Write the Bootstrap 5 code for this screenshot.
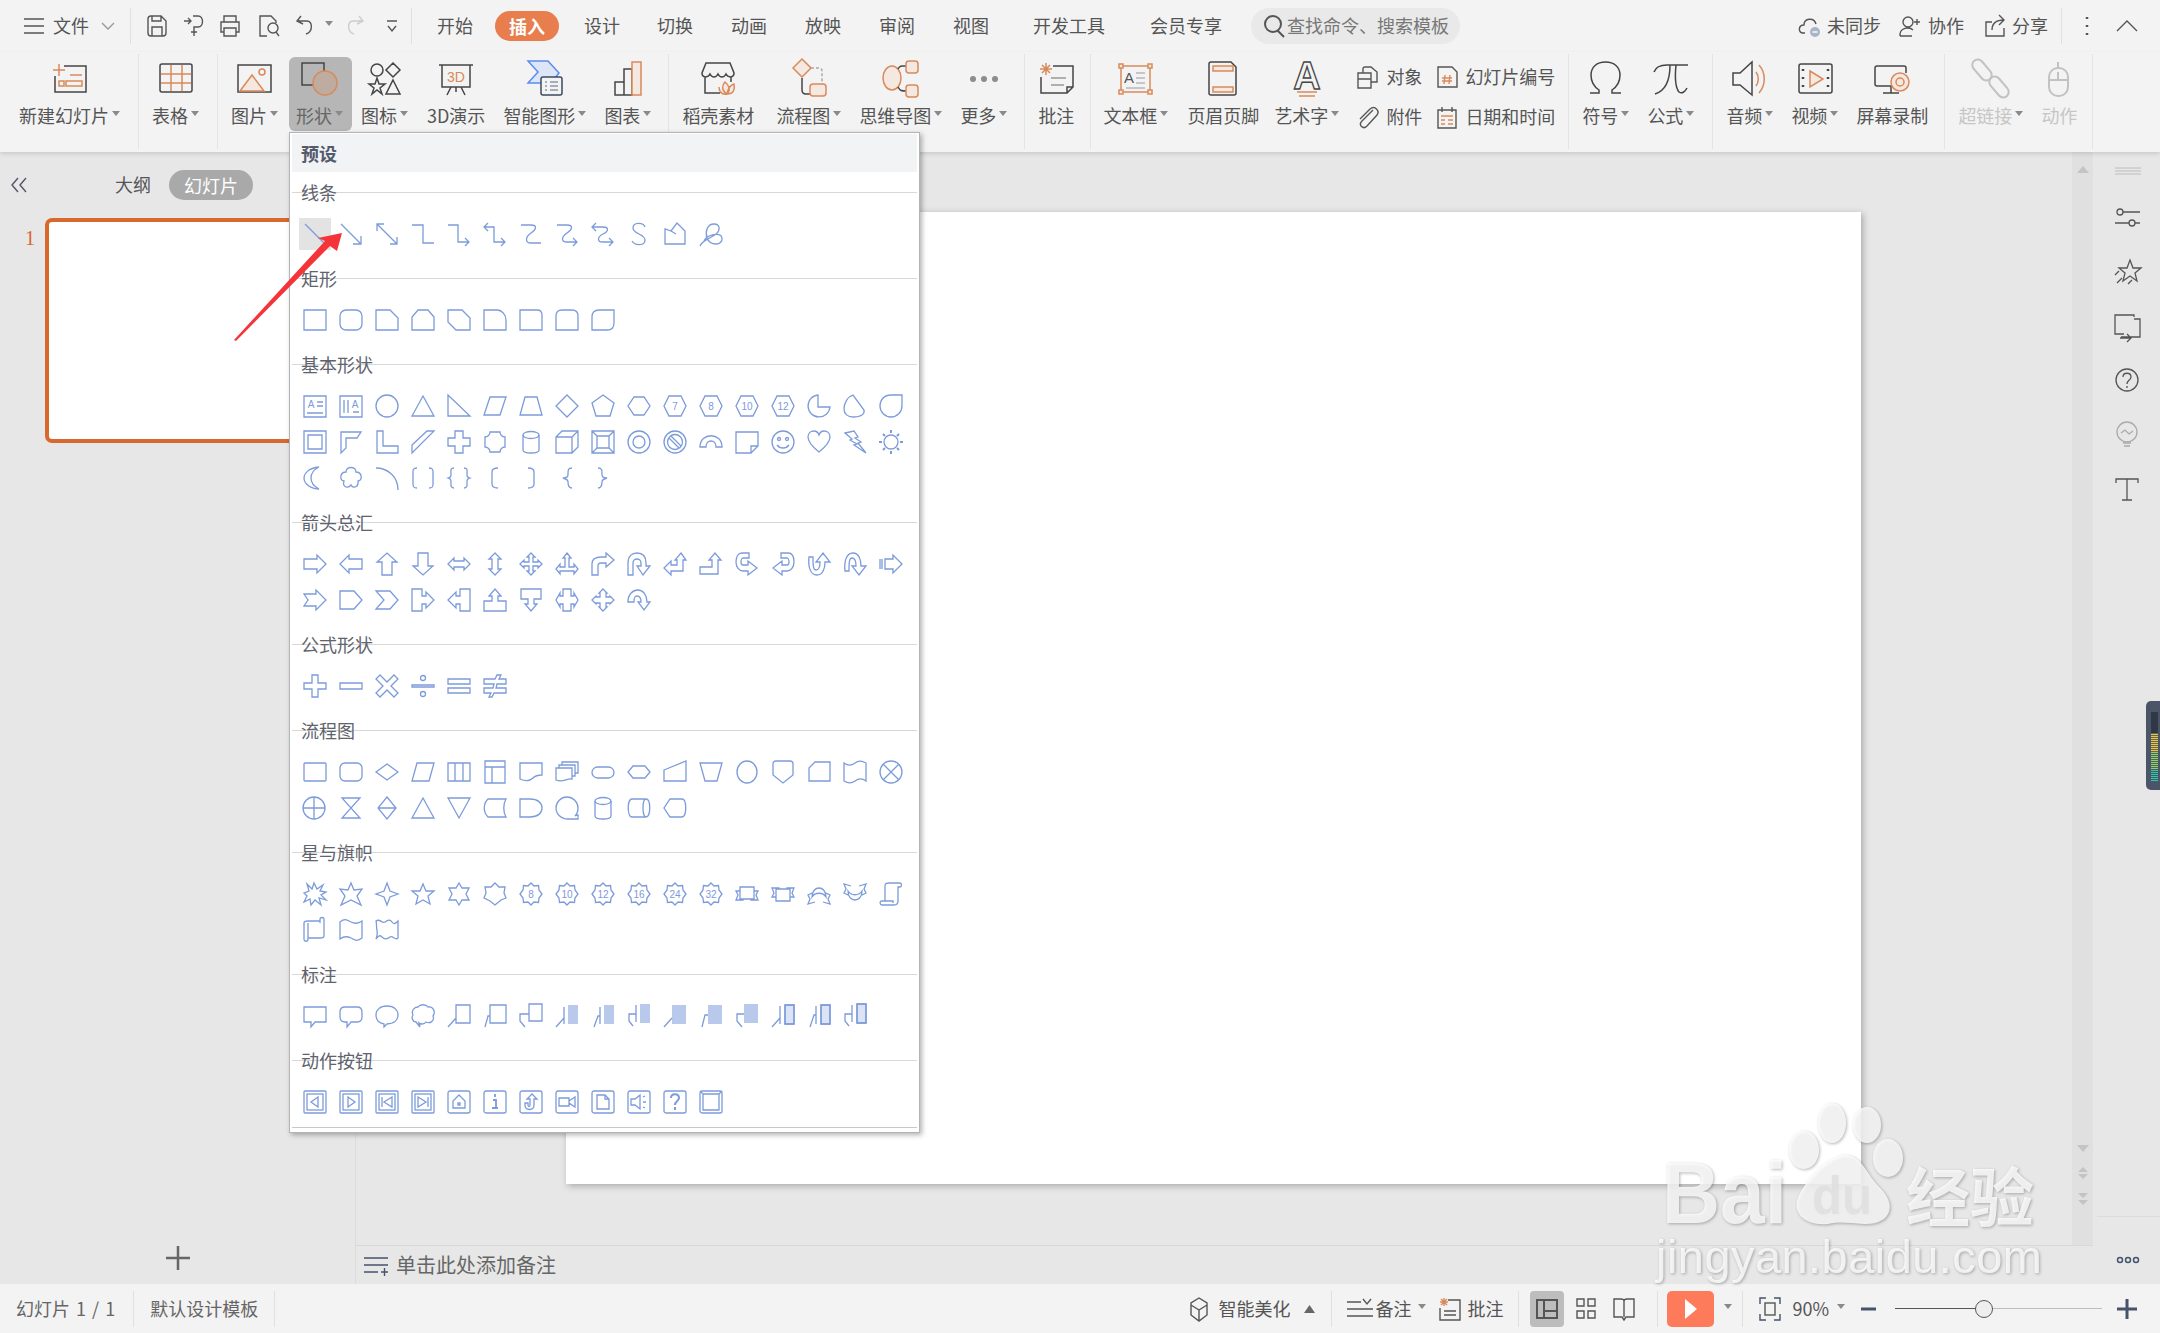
<!doctype html>
<html lang="zh-CN">
<head>
<meta charset="utf-8">
<title>WPS 演示</title>
<link href="https://cdn.jsdelivr.net/npm/bootstrap@5.3.0/dist/css/bootstrap.min.css" rel="stylesheet">
<style>
html,body{width:2160px;height:1333px;overflow:hidden;margin:0}
body{background:#e7e7e7;font-family:"Noto Sans CJK SC","Liberation Sans",sans-serif;font-size:18px;line-height:1.2;color:#555}
.app{width:2160px;height:1333px}
.g2{margin-left:2px}.g4{margin-left:4px}.g5{margin-left:5px}.g6{margin-left:6px}.g7{margin-left:7px}.g8{margin-left:8px}.g9{margin-left:9px}.g11{margin-left:11px}.g12{margin-left:12px}.g13{margin-left:13px}.g14{margin-left:14px}.g15{margin-left:15px}.g16{margin-left:16px}.g17{margin-left:17px}.g18{margin-left:18px}.g19{margin-left:19px}.g20{margin-left:20px}.g22{margin-left:22px}.g24{margin-left:24px}.g25{margin-left:25px}.g29{margin-left:29px}.g37{margin-left:37px}.g38{margin-left:38px}.g44{margin-left:44px}.g45{margin-left:45px}.g87{margin-left:87px}
.ic{flex:none;overflow:visible;fill:none;stroke:#555;stroke-width:1.4}
.i22{width:22px;height:24px}.i20{width:20px;height:24px}.i14{width:14px;height:24px}.i12{width:12px;height:24px}.i10{width:10px;height:24px}.i26{width:26px;height:26px}
.tbar{height:52px;padding:0 22px 0 24px;background:#f3f3f3;flex:none}
.vsep{width:1px;height:36px;background:#e0e0e0;flex:none}
.pill-on{padding:0 14px;height:30px;line-height:30px;border-radius:15px;background:#e87e4e;color:#fff;font-weight:700}
.srch{width:209px;height:36px;border-radius:18px;background:#e9e9e9;padding-left:12px;color:#777}
.rbar{height:100px;padding:5px 0 0 10px;background:#f3f3f3;box-shadow:0 2px 4px rgba(0,0,0,.12);position:relative;z-index:2;flex:none}
.rbt{display:flex;flex-direction:column;align-items:center;padding:0 9px;height:74px;border-radius:6px;flex:none}
.rbt>svg{width:44px;height:42px;overflow:visible;fill:none;stroke:#454545;stroke-width:1.5;flex:none}
.lb{display:flex;align-items:center;height:26px;margin-top:4px;white-space:nowrap}
.cr{display:inline-block;width:11px;height:10px;flex:none;position:relative}
.cr::before{content:"";position:absolute;left:3px;top:0;border-left:4px solid transparent;border-right:4px solid transparent;border-top:5px solid #8a8a8a}
.crs{width:8px}
.rb-on{margin-left:2px;padding-left:7px;background:#b6b6b6;color:#666}
.pe9x{padding-right:9px}.ps6{padding-left:6px}.ms1x{margin-left:1px}.me4x{margin-right:4px}.rb-n{padding:0 5px}
.vd{width:1px;height:95px;background:#e4e4e4;flex:none;margin:-3px 4px 0 9px}
.vd8{margin-left:8px}.vd7{margin-left:7px}.vd6{margin-left:6px}.vd3{margin-right:3px}.vd13{margin-left:13px}
.off{color:#c6c6c6}.off>svg{stroke:#c2c2c2;stroke-width:2}
.o{stroke:#d98a5b}.lo{stroke:#d98a5b;fill:#f4e8e0}
.ttx{font-family:"Liberation Sans",sans-serif;stroke:none;fill:#555}
.ttx3{fill:#d98a5b}
.artw{fill:#f3f3f3}
.smc{height:66px;margin-top:7px;flex:none}
.smc>div{height:26px;white-space:nowrap}
.mainrow{flex:1 1 auto;min-height:0}
.lpan{width:356px;border-right:1px solid #dcdcdc;flex:none}
.ltabs{height:30px;margin-top:18px;padding-left:10px}
.pill-g{padding:0 15px;height:30px;line-height:30px;border-radius:15px;background:#a9a9a9;color:#fff}
.trow{margin-top:18px}
.tnum{width:45px;padding:8px 0 0 25px;color:#d9682c;font-family:"Liberation Serif",serif;font-size:20px}
.thumb{width:300px;height:225px;background:#fff;border:4px solid #d9682c;border-radius:7px}
.tplus{margin-top:auto;padding-bottom:13px}
.ccol{flex:1 1 auto;min-width:0}
.crow{min-height:0}
.cvs{padding:60px 0 0 210px;flex:1 1 auto;min-width:0}
.sld{width:1295px;height:972px;background:#fff;box-shadow:2px 2px 7px rgba(0,0,0,.28)}
.sbar{width:21px;background:#e0e0e0;flex:none;padding:14px 0 40px}
.sarr{gap:14px}
.nts{height:39px;border-top:1px solid #d8d8d8;padding-left:8px;font-size:20px;color:#666;flex:none}
.rail{width:67px;flex:none;padding-top:8px;gap:26px}
.rail>svg{width:30px;height:28px;overflow:visible;fill:none;stroke:#555;stroke-width:1.3;flex:none}
.rail>svg.rh{height:18px}
.rail>svg.rb{stroke:#aaa}
.railb{margin-top:auto;height:68px;width:63px;align-self:flex-end;border-top:1px solid #dcdcdc;padding:30px 0 0 19px}
.stat{height:49px;background:#f3f3f3;flex:none;padding-right:23px}
.stat .sp{width:1px;height:36px;background:#e0e0e0;flex:none}
.stx{color:#666;word-spacing:2px}
.st-on{width:34px;height:36px;background:#bdbdbd;border-radius:4px}
.st-play{width:47px;height:36px;background:#fd7a5b;border-radius:5px}
.trk{width:207px;height:24px;background:linear-gradient(90deg,#555 0,#555 43%,#bdbdbd 43%,#bdbdbd 100%) 0 50%/100% 1px no-repeat;position:relative}
.thm{position:absolute;left:80px;top:3px;width:18px;height:18px;border-radius:50%;border:1.5px solid #555;background:#eee}
.smenu{position:absolute;left:289px;top:132px;width:631px;height:1001px;background:#fff;border:1px solid #b4b4b4;box-shadow:2px 2px 5px rgba(0,0,0,.3);z-index:5}
.shead{height:38px;line-height:38px;margin:1px 2px 0;padding-left:9px;background:#f2f3f5;font-weight:700;color:#535b6d}
.slab{height:40px;line-height:40px;margin:0 2px;padding-left:9px;color:#5e636d;background:linear-gradient(#d8d8d8,#d8d8d8) 0 50%/100% 1px no-repeat}
.sgrid{display:grid;grid-template-columns:repeat(17,36px);grid-auto-rows:36px;place-items:center;padding:4px 0 6px 7px}
.sgrid svg{width:24px;height:24px;overflow:visible;fill:none;stroke:#7c9bdb;stroke-width:1.3}
.sgrid .hl{box-sizing:content-box;padding:4px;background:#e3e3e3}
.fl{fill:#b9c9ec;stroke:none}.fp{fill:#dbe3f5}
.nm{font:10px "Liberation Sans",sans-serif;text-anchor:middle;fill:#7c9bdb;stroke:none}
.sfoot{height:1px;margin:1px 2px 0;background:#c9c9c9}
.rarrow{position:absolute;left:0;top:0;width:400px;height:400px;z-index:6;pointer-events:none}
.wmark{position:absolute;left:1640px;top:1090px;width:420px;height:210px;z-index:7;pointer-events:none;filter:drop-shadow(1px 1px 1.5px rgba(0,0,0,.35))}
.wmark *{fill:#fff;fill-opacity:.8}
.wmark .wdu{fill:#ddd}
.vol{position:absolute;right:0;top:701px;width:14px;height:89px;background:#4c5568;border-radius:5px 0 0 5px;padding:11px 2px 9px 5px;z-index:3}
.volb{height:100%;background:repeating-linear-gradient(180deg,transparent 0 1px,rgba(50,58,75,.7) 1px 2px),linear-gradient(180deg,#2f3645 0 30%,#e6c84c 30% 58%,#90d070 58% 82%,#3fc0a8 82% 100%)}
</style>
</head>
<body>
<div class="app position-relative d-flex flex-column">

<!-- title row -->
<div class="tbar d-flex align-items-center">
<svg class="ic i20"><path d="M0 5H20M0 12H20M0 19H20"/></svg><span class="g9">文件</span>
<svg class="ic i14 g12"><path d="M1 9L7 15 13 9" stroke="#999"/></svg><div class="vsep g15"></div>
<svg class="ic i22 g15"><path d="M2 5Q2 2 5 2H15L20 7V19Q20 22 17 22H5Q2 22 2 19ZM6 2V7H15V2M6 22V13H16V22"/></svg>
<svg class="ic i22 g15"><path d="M1 7H7M5 4L8 7 5 10M10 2H15C21 2 21 13 15 13H11V22M8 18H14"/></svg>
<svg class="ic i22 g14"><path d="M5 8V2H17V8M5 18H2V8H20V18H17M5 14H17V22H5Z"/></svg>
<svg class="ic i22 g16"><path d="M10 22H3V2H14L19 7V9M11 14a5 5 0 1 0 10 0a5 5 0 1 0-10 0M19 18L22 22"/></svg>
<svg class="ic i22 g16"><path d="M6 2L2 7 8 10M2 7H12C18 7 18 18 11 20"/></svg>
<i class="cr g5"></i>
<svg class="ic i22 g11"><path d="M15 2L19 7 13 10M19 7H9C3 7 3 18 10 20" stroke="#ccc"/></svg>
<svg class="ic i12 g20"><path d="M1 7H11M2 12L6 17 10 12"/></svg><div class="vsep g13"></div>
<span class="g25">开始</span><span class="pill-on g22">插入</span><span class="g25">设计</span><span class="g37">切换</span><span class="g38">动画</span><span class="g38">放映</span><span class="g38">审阅</span><span class="g38">视图</span><span class="g44">开发工具</span><span class="g45">会员专享</span>
<div class="srch g29 d-flex align-items-center"><svg class="ic i22"><path d="M2 10a8 8 0 1 0 16 0a8 8 0 1 0-16 0M14 16L21 23" stroke-width="2"/></svg><span class="g2">查找命令、搜索模板</span></div>
<svg class="ic i22 ms-auto"><path d="M7 19H5C0 19 0 11 6 11 6 4 16 3 18 10" /><circle cx="17" cy="18" r="5" fill="#a9b4c8" stroke="none"/><path d="M14.500 18H19.500" stroke="#fff"/></svg><span class="g7">未同步</span>
<svg class="ic i22 g17"><path d="M5 8a5 5 0 1 0 10 0a5 5 0 1 0-10 0M2 22V20C2 16 6 14 10 14 12 14 14 15 15 16M2 22H14M16 8H22M19 5V11"/></svg><span class="g8">协作</span>
<svg class="ic i22 g20"><path d="M8 8H2V22H20V14M8 16C8 9 12 6 20 6M15 1L20 6 15 11"/></svg><span class="g6">分享</span>
<div class="vsep g13"></div>
<svg class="ic i10 g20"><path d="M5 3V5M5 11V13M5 19V21" stroke-width="2.500"/></svg>
<svg class="ic i22 g24"><path d="M1 17L11 7 21 17"/></svg>
</div>

<!-- ribbon -->
<div class="rbar d-flex align-items-start">
<div class="rbt"><svg><path d="M16 9H38V35H7V19"/><path class="o" d="M11 7V19M5 13H17M22 18H34M11 24h5v5h-5zM18 24h16v5H18z"/></svg><div class="lb">新建幻灯片<i class="cr"></i></div></div>
<div class="vd"></div>
<div class="rbt"><svg><rect x="6" y="7" width="32" height="28" rx="2"/><path class="o" d="M17 8V34M28 8V34M7 17H37M7 26H37"/></svg><div class="lb">表格<i class="cr"></i></div></div>
<div class="vd"></div>
<div class="rbt"><svg><rect x="5" y="8" width="33" height="27"/><path class="lo" d="M7 34L19 18 31 34Z"/><circle class="o" cx="29" cy="15" r="3"/></svg><div class="lb">图片<i class="cr"></i></div></div>
<div class="rbt rb-on"><svg><rect x="4" y="6" width="22" height="22"/><circle cx="27" cy="26" r="12" fill="#bfaca1" stroke="#d88a58"/></svg><div class="lb">形状<i class="cr"></i></div></div>
<div class="rbt"><svg><circle cx="14" cy="13" r="6"/><path d="M30 6L37 13 30 20 23 13ZM14 21L16 27 22 27 17 31 19 37 14 33 9 37 11 31 6 27 12 27ZM30 23L37 37H23Z"/></svg><div class="lb">图标<i class="cr"></i></div></div>
<div class="rbt ms1x pe9x"><svg><path d="M5 8H39M8 8V30H36V8M22 30V35M17 30L13 38M27 30L31 38"/><text class="ttx ttx3" x="22" y="25" text-anchor="middle" font-size="14">3D</text></svg><div class="lb">3D演示</div></div>
<div class="rbt"><svg><path d="M5 4H25L36 16 28 26H5L15 15Z" fill="#dde6f7" stroke="#5b8def"/><rect x="18" y="20" width="21" height="18" rx="2" fill="#f3f3f3" stroke="#3d4a63"/><path d="M22 25H24M27 25H35M22 29H24M27 29H35M22 33H24M27 33H35" stroke="#5d6a83" stroke-width="1.200"/></svg><div class="lb">智能图形<i class="cr"></i></div></div>
<div class="rbt"><svg><path d="M9 25H18V38H9ZM18 12H26V38H18Z"/><rect class="lo" x="26" y="5" width="9" height="33"/></svg><div class="lb">图表<i class="cr"></i></div></div>
<div class="vd vd8"></div>
<div class="rbt me4x"><svg><path d="M10 6H34L38 16C38 21 32 21 30 17 28 21 24 21 22 17 20 21 16 21 14 17 12 21 6 21 6 16ZM9 20V36H24M35 20V25"/><path class="lo" d="M31 37C25 33 26 28 29 25 33 28 35 33 31 37ZM31 37C38 37 39 32 38 27 34 28 32 32 31 37ZM31 37C25 38 23 34 23 30"/></svg><div class="lb">稻壳素材</div></div>
<div class="rbt"><svg><path class="lo" d="M15 2L24 11 15 20 6 11Z"/><path d="M24 11H32Q35 11 35 14V27" stroke="#aaa" stroke-dasharray="3 2"/><path d="M15 21V33Q15 37 19 37H23"/><rect class="lo" x="23" y="27" width="16" height="12" rx="3"/></svg><div class="lb">流程图<i class="cr"></i></div></div>
<div class="rbt"><svg><ellipse class="lo" cx="13" cy="21" rx="9" ry="12"/><path d="M19 12C21 8 23 9 27 9M19 30C21 34 23 34 27 34"/><rect class="lo" x="27" y="4" width="12" height="12" rx="3"/><rect class="lo" x="27" y="28" width="12" height="12" rx="3"/></svg><div class="lb">思维导图<i class="cr"></i></div></div>
<div class="rbt"><svg><g fill="#8c8c8c" stroke="none"><circle cx="11" cy="22" r="3"/><circle cx="22" cy="22" r="3"/><circle cx="33" cy="22" r="3"/></g></svg><div class="lb">更多<i class="cr"></i></div></div>
<div class="vd vd8"></div>
<div class="rbt rb-n"><svg><path d="M19 9H39V30L33 36H7V20M39 30H33V36"/><path d="M17 21H32M17 28H30" stroke="#999"/><path class="o" d="M12 6V18M6 12H18M8 8L16 16M16 8L8 16"/></svg><div class="lb">批注</div></div>
<div class="vd vd7 vd3"></div>
<div class="rbt"><svg><rect class="o" x="7" y="9" width="29" height="26"/><path class="lo" d="M5 7h4v4H5zM34 7h4v4h-4zM5 33h4v4H5zM34 33h4v4h-4z"/><text class="ttx" x="10" y="26" font-size="15">A</text><path d="M22 16H31M22 21H31M22 26H31M12 31H31" stroke="#999" stroke-width="1.200"/></svg><div class="lb">文本框<i class="cr"></i></div></div>
<div class="rbt ms1x"><svg><path d="M8 7Q8 5 10 5H30L35 10V36Q35 38 33 38H10Q8 38 8 36Z"/><rect class="lo" x="12" y="9" width="20" height="5"/><rect class="lo" x="12" y="30" width="20" height="5"/></svg><div class="lb">页眉页脚</div></div>
<div class="rbt ps6"><svg><text class="artw" x="22" y="32" text-anchor="middle" font-family="Liberation Sans" font-weight="700" font-size="38" stroke-width="1.300">A</text><path class="o" d="M12 35H32M14 39H30"/></svg><div class="lb">艺术字<i class="cr"></i></div></div>
<div class="smc g8 d-flex flex-column justify-content-between">
<div class="d-flex align-items-center"><svg class="ic i22"><path d="M7 8V4Q7 2 9 2H15L21 7V17H15M2 8H15V23H2ZM2 14H15"/></svg><span class="g8">对象</span></div>
<div class="d-flex align-items-center"><svg class="ic i22"><path d="M17 5L6 16C2 20 7 25 11 21L21 10C24 6 19 0 14 4L4 14"/></svg><span class="g8">附件</span></div>
</div>
<div class="smc g14 d-flex flex-column justify-content-between">
<div class="d-flex align-items-center"><svg class="ic i22"><path d="M2 2H16L21 7V22H2Z"/><path class="o" d="M9 10L8 19M14 10L13 19M6 13H16M6 16H16"/></svg><span class="g7">幻灯片编号</span></div>
<div class="d-flex align-items-center"><svg class="ic i22"><path d="M2 5H20V23H2ZM6 2V7M16 2V7"/><path class="o" d="M5 11H17M5 15H9M12 15H17M5 19H9M12 19H17"/></svg><span class="g7">日期和时间</span></div>
</div>
<div class="vd vd13"></div>
<div class="rbt"><svg><path d="M6 36H15V33C9 29 7 24 7 18 7 10 13 5 21.500 5S36 10 36 18C36 24 34 29 28 33V36H37"/></svg><div class="lb">符号<i class="cr"></i></div></div>
<div class="rbt"><svg><path d="M5 15C7 9 12 8 18 8H39M21 8C21 20 19 33 6 37M27 8C26 18 26 30 30 35 33 37 36 35 38 31"/></svg><div class="lb">公式<i class="cr"></i></div></div>
<div class="vd"></div>
<div class="rbt"><svg><path d="M5 16H12L24 5V38L12 28H5Z"/><path class="o" d="M28 15C31 19 31 25 28 29M31 8C38 16 38 28 31 36"/></svg><div class="lb">音频<i class="cr"></i></div></div>
<div class="rbt"><svg><rect x="6" y="7" width="33" height="29" rx="2"/><path d="M10 12V14M10 20V22M10 28V30M35 12V14M35 20V22M35 28V30" stroke-width="2.500"/><path class="lo" d="M17 14L30 22 17 30Z"/></svg><div class="lb">视频<i class="cr"></i></div></div>
<div class="rbt"><svg><path d="M24 29H7Q5 29 5 27V11Q5 9 7 9H34Q36 9 36 11V16M21 29V36M13 36H29"/><circle class="lo" cx="30" cy="25" r="9"/><circle class="o" cx="30" cy="25" r="4"/></svg><div class="lb">屏幕录制</div></div>
<div class="vd vd7"></div>
<div class="rbt off"><svg><rect x="1" y="7.500" width="24" height="11" rx="5.500" transform="rotate(50 13 13)"/><rect x="18" y="24.500" width="24" height="11" rx="5.500" transform="rotate(50 30 30)"/></svg><div class="lb">超链接<i class="cr"></i></div></div>
<div class="rbt off rb-n"><svg><rect x="12" y="11" width="19" height="28" rx="9"/><path d="M21 11V5M12 23H31M21 15V23"/></svg><div class="lb">动作</div></div>
<div class="vd vd6"></div>
</div>

<!-- main -->
<div class="mainrow d-flex">
<div class="lpan d-flex flex-column">
<div class="ltabs d-flex align-items-center">
<svg class="ic" width="18" height="24"><path d="M8 5L2 12 8 19M16 5L10 12 16 19" stroke="#556"/></svg>
<span class="g87">大纲</span><span class="pill-g g18">幻灯片</span>
</div>
<div class="d-flex trow"><div class="tnum">1</div><div class="thumb"></div></div>
<div class="tplus align-self-center"><svg class="ic" width="26" height="26"><path d="M13 1V25M1 13H25" stroke="#666" stroke-width="2.500"/></svg></div>
</div>
<div class="ccol d-flex flex-column">
<div class="crow d-flex flex-grow-1">
<div class="cvs"><div class="sld"></div></div>
<div class="sbar d-flex flex-column align-items-center justify-content-between">
<svg width="12" height="8"><path d="M6 0L12 7H0Z" fill="#c4c4c4"/></svg>
<div class="sarr d-flex flex-column align-items-center">
<svg width="12" height="8"><path d="M6 7L12 0H0Z" fill="#c4c4c4"/></svg>
<svg width="12" height="12"><path d="M6 0L11 5H1ZM6 12L11 7H1Z" fill="#c4c4c4"/></svg>
<svg width="12" height="12"><path d="M6 5L11 0H1ZM6 12L11 7H1Z" fill="#c4c4c4"/></svg>
</div>
</div>
</div>
<div class="nts d-flex align-items-center">
<svg class="ic" width="24" height="24"><path d="M0 5H24M0 12H24M0 19H14M17 19H24M20.500 15V23" stroke="#46536b"/></svg><span class="g8">单击此处添加备注</span>
</div>
</div>
<div class="rail d-flex flex-column align-items-center">
<svg class="rh"><path d="M3 8H29M3 11H29M3 14H29" stroke="#ccc"/></svg>
<svg><circle cx="8" cy="8" r="3"/><circle cx="20" cy="19" r="3"/><path d="M11 8H28M3 19H17M23 19H28"/></svg>
<svg><path d="M18 2L21 10 29 10 23 15 25 23 18 18 11 23 13 15 7 10 15 10ZM3 17L7 13M5 25L10 20M16 26L20 22"/></svg>
<svg><path d="M22 5V3H3V22H12M22 7H28V25H9M8 26H19M15 22L19 26 15 30"/></svg>
<svg><circle cx="15" cy="14" r="11"/><path d="M11 11C11 6 19 6 19 11 19 14 15 14 15 18M15 20V22"/></svg>
<svg class="rb"><circle cx="15" cy="12" r="10"/><path d="M9 13L13 10 17 14 21 11M11 23H19M12 26H18"/></svg>
<svg><path d="M4 9V5H26V9M15 5V26M10 26H20"/></svg>
<div class="railb"><svg class="ic" width="26" height="10"><g stroke="#46536b" stroke-width="1.500"><circle cx="4" cy="5" r="2.500"/><circle cx="12" cy="5" r="2.500"/><circle cx="20" cy="5" r="2.500"/></g></svg></div>
</div>
</div>

<!-- status -->
<div class="stat d-flex align-items-center">
<span class="g16 stx">幻灯片 1 / 1</span><div class="sp g18"></div><span class="g16 stx">默认设计模板</span><div class="sp g16"></div>
<svg class="ic i20 ms-auto"><path d="M10 1L18 6V18L10 24 2 18V6ZM2 8L10 13 18 8M10 13V24"/></svg><span class="g9">智能美化</span>
<svg class="g14" width="11" height="10"><path d="M5.500 1L11 9H0Z" fill="#666"/></svg><div class="sp g16"></div>
<svg class="ic i26 g15"><path d="M0 6H14M0 13H26M0 20H26M16 3L20 8 24 3"/></svg><span class="g2">备注</span><i class="cr crs g4"></i>
<svg class="ic i22 g15"><path d="M10 3H22V23H2V11M6 14H18M6 18H18"/><path class="o" d="M6 1V9M2 5H10M3 2L9 8M9 2L3 8"/></svg><span class="g7">批注</span>
<div class="sp g15"></div>
<div class="st-on g11 d-flex align-items-center justify-content-center"><svg class="ic i22"><path d="M1 3H21V21H1ZM8 3V21M8 14H21" stroke-width="2"/></svg></div>
<svg class="ic i22 g11"><path d="M2 2H9V9H2ZM13 2H20V9H13ZM2 14H9V21H2ZM13 14H20V21H13Z"/></svg>
<svg class="ic i22 g16"><path d="M1 2H8C10 2 11 3 11 4 11 3 12 2 14 2H21V20H13L11 23 9 20H1ZM11 4V20"/></svg>
<div class="sp g22"></div>
<div class="st-play g9 d-flex align-items-center justify-content-center"><svg width="16" height="24"><path d="M2 2L14 12 2 22Z" fill="#fff"/></svg></div>
<i class="cr crs g7"></i>
<div class="sp g13"></div>
<svg class="ic i22 g16"><path d="M1 7V1H7M15 1H21V7M21 17V23H15M7 23H1V17" stroke="#46536b"/><rect x="6" y="6" width="10" height="12"/></svg>
<span class="g11">90%</span><i class="cr crs g5"></i>
<svg class="g19" width="15" height="6"><path d="M0 3H15" stroke="#46536b" stroke-width="3"/></svg>
<div class="trk g19"><div class="thm"></div></div>
<svg class="g15" width="20" height="20"><path d="M10 0V20M0 10H20" stroke="#46536b" stroke-width="3"/></svg>
</div>

<!-- shapes dropdown -->
<div class="smenu">
<div class="shead">预设</div>
<div class="slab">线条</div>
<div class="sgrid">
<svg class="hl"><path d="M2 2L22 22"/></svg>
<svg><path d="M2 2L22 22M22 14V22H14"/></svg>
<svg><path d="M2 2L22 22M2 9V2H9M22 15V22H15"/></svg>
<svg><path d="M1 3H12V21H23"/></svg>
<svg><path d="M1 3H11V20H22M18 16L22 20 18 24"/></svg>
<svg><path d="M5 1L1 5 5 9M1 5H11V20H22M18 16L22 20 18 24"/></svg>
<svg><path d="M2 3H12C18 3 18 7 12 11 6 15 6 21 12 21H22"/></svg>
<svg><path d="M2 3H12C18 3 18 7 12 11 6 15 6 20 12 20H22M18 16L22 20 18 24"/></svg>
<svg><path d="M5 1L1 5 5 9M1 5H12C18 5 18 9 12 12 6 15 6 20 12 20H22M18 16L22 20 18 24"/></svg>
<svg><path d="M18 5C16 0 6 0 6 6 6 12 18 12 18 18 18 24 8 24 5 19"/></svg>
<svg><path d="M2 22V7L8 9 14 1 22 9V22ZM8 9L13 12"/></svg>
<svg><path d="M1 24C4 18 8 18 14 14 22 10 22 2 15 2 8 2 6 10 8 16 11 24 24 24 23 16 22 10 8 12 5 19"/></svg>
</div>
<div class="slab">矩形</div>
<div class="sgrid">
<svg><path d="M1 2H23V22H1Z"/></svg>
<svg><rect x="1" y="2" width="22" height="20" rx="6"/></svg>
<svg><path d="M1 2H15L23 10V22H1Z"/></svg>
<svg><path d="M7 2H17L23 9V22H1V9Z"/></svg>
<svg><path d="M1 2H15L23 10V22H9L1 14Z"/></svg>
<svg><path d="M1 2H14C19 2 23 7 23 12V22H1Z"/></svg>
<svg><path d="M1 2H18Q23 2 23 7V22H1Z"/></svg>
<svg><path d="M1 22V8Q1 2 7 2H17Q23 2 23 8V22Z"/></svg>
<svg><path d="M8 2H23V15Q23 22 16 22H1V9Q1 2 8 2Z"/></svg>
</div>
<div class="slab">基本形状</div>
<div class="sgrid">
<svg><path d="M1 2H23V23H1ZM4 19H20M14 8H20M14 12H20"/><text class="nm" x="8" y="14">A</text></svg>
<svg><path d="M1 2H23V23H1ZM5 6V19M9 6V19M14 18H20"/><text class="nm" x="16" y="14">A</text></svg>
<svg><circle cx="12" cy="12" r="11"/></svg>
<svg><path d="M12 2L23 22H1Z"/></svg>
<svg><path d="M1 1V22H23Z"/></svg>
<svg><path d="M7 3H23L17 21H1Z"/></svg>
<svg><path d="M6 3H18L23 21H1Z"/></svg>
<svg><path d="M12 1L23 12 12 23 1 12Z"/></svg>
<svg><path d="M12 1L23 9 19 22H5L1 9Z"/></svg>
<svg><path d="M7 3H17L23 12 17 21H7L1 12Z"/></svg>
<svg><path d="M6 2H18L23 12 18 22H6L1 12Z"/><text class="nm" x="12" y="16">7</text></svg>
<svg><path d="M6 2H18L23 12 18 22H6L1 12Z"/><text class="nm" x="12" y="16">8</text></svg>
<svg><path d="M6 2H18L23 12 18 22H6L1 12Z"/><text class="nm" x="12" y="16">10</text></svg>
<svg><path d="M6 2H18L23 12 18 22H6L1 12Z"/><text class="nm" x="12" y="16">12</text></svg>
<svg><path d="M11 1A11 11 0 1 0 23 13H11Z"/></svg>
<svg><path d="M10 1C4 3 1 10 1 15 1 20 5 23 10 23 18 23 22 20 21 16Z"/></svg>
<svg><path d="M23 1H12C5 1 1 6 1 12 1 18 6 23 12 23 18 23 23 18 23 12Z"/></svg>
<svg><path d="M1 1H23V23H1ZM5 5H19V19H5Z"/></svg>
<svg><path d="M2 23V2H22L18 8H7V18Z"/></svg>
<svg><path d="M2 1H8V16H23V23H2Z"/></svg>
<svg><path d="M1 15L16 1H23L1 23Z"/></svg>
<svg><path d="M8 1H16V8H23V16H16V23H8V16H1V8H8Z"/></svg>
<svg><path d="M7 2H17A5 5 0 0 0 22 7V17A5 5 0 0 0 17 22H7A5 5 0 0 0 2 17V7A5 5 0 0 0 7 2Z"/></svg>
<svg><path d="M4 5V20C4 24 20 24 20 20V5"/><ellipse cx="12" cy="5" rx="8" ry="3.500"/></svg>
<svg><path d="M1 7H17V23H1ZM1 7L7 1H23V17L17 23M17 7L23 1"/></svg>
<svg><path d="M1 1H23V23H1ZM6 6H18V18H6ZM1 1L6 6M23 1L18 6M1 23L6 18M23 23L18 18"/></svg>
<svg><circle cx="12" cy="12" r="11"/><circle cx="12" cy="12" r="6"/></svg>
<svg><circle cx="12" cy="12" r="11"/><circle cx="12" cy="12" r="7.500"/><path d="M6 8L16 18M8 6L18 16"/></svg>
<svg><path d="M1 17C1 2 23 2 23 17H17C17 9 7 9 7 17Z"/></svg>
<svg><path d="M1 2H23V16L16 23H1ZM16 23V16H23"/></svg>
<svg><circle cx="12" cy="12" r="11"/><circle cx="8" cy="9" r="1.500"/><circle cx="16" cy="9" r="1.500"/><path d="M6 15C9 19 15 19 18 15"/></svg>
<svg><path d="M12 22C2 14 1 10 1 7 1 3 4 1 7 1 9 1 11 2 12 5 13 2 15 1 17 1 20 1 23 3 23 7 23 10 22 14 12 22Z"/></svg>
<svg><path d="M2 3L11 1 15 7 12 8 18 12 15 13 23 23 11 15 14 14 7 10 9 9Z"/></svg>
<svg><circle cx="12" cy="12" r="7"/><path d="M12 0V3M12 21V24M0 12H3M21 12H24M4 4L6 6M18 18L20 20M20 4L18 6M4 20L6 18" stroke-width="2"/></svg>
<svg><path d="M16 1C5 2 1 8 1 12 1 18 8 23 16 23 10 20 8 16 8 12 8 8 10 4 16 1Z"/></svg>
<svg><path d="M7 6C7 0 17 0 17 6 23 6 24 14 19 15 20 21 14 23 12 19 9 23 3 21 5 15 0 14 1 6 7 6Z"/></svg>
<svg><path d="M1 2C12 2 23 10 23 24"/></svg>
<svg><path d="M6 2C2 2 2 4 2 6V18C2 20 2 22 6 22M18 2C22 2 22 4 22 6V18C22 20 22 22 18 22"/></svg>
<svg><path d="M7 2C3 2 4 5 4 8S4 11 1 12C4 13 4 14 4 16S3 22 7 22M17 2C21 2 20 5 20 8S20 11 23 12C20 13 20 14 20 16S21 22 17 22"/></svg>
<svg><path d="M15 2C11 2 9 3 9 6V18C9 21 11 22 15 22"/></svg>
<svg><path d="M9 2C13 2 15 3 15 6V18C15 21 13 22 9 22"/></svg>
<svg><path d="M17 2C13 2 13 4 13 8S12 11 8 12C12 13 13 14 13 16S13 22 17 22"/></svg>
<svg><path d="M7 2C11 2 11 4 11 8S12 11 16 12C12 13 11 14 11 16S11 22 7 22"/></svg>
</div>
<div class="slab">箭头总汇</div>
<div class="sgrid">
<svg><path d="M1 7H14V3L23 12 14 21V17H1Z"/></svg>
<svg><path d="M23 7H10V3L1 12 10 21V17H23Z"/></svg>
<svg><path d="M7 23V10H2L12 1 22 10H17V23Z"/></svg>
<svg><path d="M7 1V14H2L12 23 22 14H17V1Z"/></svg>
<svg><path d="M1 12L7 6V9H17V6L23 12 17 18V15H7V18Z"/></svg>
<svg><path d="M12 1L18 7H15V17H18L12 23 6 17H9V7H6Z"/></svg>
<svg><path d="M12 1L16 5H14V10H19V8L23 12 19 16V14H14V19H16L12 23 8 19H10V14H5V16L1 12 5 8V10H10V5H8Z"/></svg>
<svg><path d="M12 1L16 6H14V15H19V12L23 17 19 22V19H5V22L1 17 5 12V15H10V6H8Z"/></svg>
<svg><path d="M1 23V12C1 7 5 5 10 5H15V1L23 8 15 15V11H10C8 11 7 12 7 14V23Z"/></svg>
<svg><path d="M1 23V11C1 4 5 1 10 1S19 4 19 11V14H23L16 23 10 14H14V11C14 8 12 7 10 7S6 8 6 11V23Z"/></svg>
<svg><path d="M18 1L23 8H20V19H8V23L1 16 8 9V13H14V8H12Z"/></svg>
<svg><path d="M1 22V15H13V8H10L16 1 22 8H19V22Z"/></svg>
<svg><path d="M14 1H7C3 1 1 5 1 10S4 19 8 19H13V23L22 16 13 9V13H8C7 13 6 12 6 10S7 6 8 6H14Z"/></svg>
<svg><path d="M10 1H17C21 1 23 5 23 10S20 19 16 19H11V23L2 16 11 9V13H16C17 13 18 12 18 10S17 6 16 6H10Z"/></svg>
<svg><path d="M2 5C1 14 3 23 10 23 16 23 18 16 18 10H23L16 1 9 10H13C13 14 12 18 9 18 6 18 6 12 6 5Z"/></svg>
<svg><path d="M2 19C1 10 3 1 10 1 16 1 18 8 18 14H23L16 23 9 14H13C13 10 12 6 9 6 6 6 6 12 6 19Z"/></svg>
<svg><path d="M1 7V17M3 7V17M6 7H14V3L23 12 14 21V17H6Z"/></svg>
<svg><path d="M1 6H13V2L23 12 13 22V18H1L5 12Z"/></svg>
<svg><path d="M1 3H15L23 12 15 21H1Z"/></svg>
<svg><path d="M1 3H15L23 12 15 21H1L9 12Z"/></svg>
<svg><path d="M1 1H11V8H15V4L23 12 15 20V16H11V23H1Z"/></svg>
<svg><path d="M23 1H13V8H9V4L1 12 9 20V16H13V23H23Z"/></svg>
<svg><path d="M1 23V13H9V8H6L12 1 18 8H15V13H23V23Z"/></svg>
<svg><path d="M2 1V11H9V16H6L12 23 18 16H15V11H22V1Z"/></svg>
<svg><path d="M8 1H16V8H19V5L23 12 19 19V16H16V23H8V16H5V19L1 12 5 5V8H8Z"/></svg>
<svg><path d="M12 1L16 5H15V9H19V8L23 12 19 16V15H15V19H16L12 23 8 19H9V15H5V16L1 12 5 8V9H9V5H8Z"/></svg>
<svg><path d="M1 14C1 6 6 2 11 2S20 7 20 14H23L17 22 11 14H14C14 10 13 8 10 8S7 11 7 14Z"/></svg>
</div>
<div class="slab">公式形状</div>
<div class="sgrid">
<svg><path d="M9 1H15V9H23V15H15V23H9V15H1V9H9Z"/></svg>
<svg><path d="M1 9H23V15H1Z"/></svg>
<svg><path d="M5 1L12 8 19 1 23 5 16 12 23 19 19 23 12 16 5 23 1 19 8 12 1 5Z"/></svg>
<svg><path d="M1 11H23V13H1Z"/><circle cx="12" cy="4" r="2.500"/><circle cx="12" cy="20" r="2.500"/></svg>
<svg><path d="M1 5H23V10H1ZM1 14H23V19H1Z"/></svg>
<svg><path d="M1 5H12L14 1H18L16 5H23V10H14L13 14H23V19H11L9 23H6L8 19H1V14H10L11 10H1Z"/></svg>
</div>
<div class="slab">流程图</div>
<div class="sgrid">
<svg><rect x="1" y="3" width="22" height="18" rx="1"/></svg>
<svg><rect x="1" y="3" width="22" height="18" rx="5"/></svg>
<svg><path d="M12 4L23 12 12 20 1 12Z"/></svg>
<svg><path d="M6 3H23L18 21H1Z"/></svg>
<svg><path d="M1 3H23V21H1ZM8 3V21M16 3V21"/></svg>
<svg><path d="M2 1H22V23H2ZM2 7H22M9 7V23"/></svg>
<svg><path d="M1 3H23V15C18 15 16 16 14 18 12 20 8 22 1 19Z"/></svg>
<svg><path d="M1 8H17V19C12 18 8 23 1 20ZM4 8V5H20V16H17M7 5V2H23V13H20"/></svg>
<svg><rect x="1" y="7" width="22" height="11" rx="5.500"/></svg>
<svg><path d="M6 6H18L23 12 18 18H6L1 12Z"/></svg>
<svg><path d="M1 10L23 1V21H1Z"/></svg>
<svg><path d="M1 3H23L18 21H6Z"/></svg>
<svg><ellipse cx="12" cy="12" rx="10" ry="11"/></svg>
<svg><path d="M2 4Q2 1 5 1H19Q22 1 22 4V15L12 23 2 15Z"/></svg>
<svg><path d="M8 2H23V21H2V8Z"/></svg>
<svg><path d="M1 3C5 6 8 6 12 3S19 1 23 3V21C19 18 16 18 12 21S5 23 1 21Z"/></svg>
<svg><circle cx="12" cy="12" r="11"/><path d="M4 4L20 20M20 4L4 20"/></svg>
<svg><circle cx="11" cy="12" r="11"/><path d="M11 1V23M0 12H22"/></svg>
<svg><path d="M3 2H21L3 22H21Z"/></svg>
<svg><path d="M12 1L21 12 12 23 3 12ZM3 12H21"/></svg>
<svg><path d="M12 2L23 22H1Z"/></svg>
<svg><path d="M1 2H23L12 22Z"/></svg>
<svg><path d="M5 3H23C20 8 20 16 23 21H5C0 16 0 8 5 3Z"/></svg>
<svg><path d="M1 3H11C19 3 23 7 23 12S19 21 11 21H1Z"/></svg>
<svg><path d="M23 23H13C6 23 1 18 1 12S6 1 12 1 23 6 23 12C23 15 22 18 20 20L23 19Z"/></svg>
<svg><path d="M4 5V20C4 24 20 24 20 20V5"/><ellipse cx="12" cy="5" rx="8" ry="3.500"/></svg>
<svg><path d="M5 3H19C24 3 24 21 19 21H5C0 21 0 3 5 3ZM19 3C15 3 15 21 19 21"/></svg>
<svg><path d="M7 3H19C24 3 24 21 19 21H7L1 12Z"/></svg>
</div>
<div class="slab">星与旗帜</div>
<div class="sgrid">
<svg><path d="M4 2L9 7 11 1 14 7 20 3 17 9 23 10 18 13 23 18 16 16 18 23 12 18 8 23 7 17 1 20 4 14 1 11 6 9Z"/></svg>
<svg><path d="M12 1L15 8 23 7 18 14 22 23 12 18 2 23 6 14 1 7 9 8Z"/></svg>
<svg><path d="M12 1L15 9 23 12 15 15 12 23 9 15 1 12 9 9Z"/></svg>
<svg><path d="M12 2L15 9 23 9 17 14 19 22 12 18 5 22 7 14 1 9 9 9Z"/></svg>
<svg><path d="M12 1L15 6 22 6 19 12 22 18 15 18 12 23 9 18 2 18 5 12 2 6 9 6Z"/></svg>
<svg><path d="M12 1L16 5 22 5 21 11 23 16 18 18 12 23 7 19 1 16 3 11 2 5 8 5Z"/></svg>
<svg><path d="M12 1L15 4 19.500 3.500 20 8 23 12 20 16 19.500 20.500 15 20 12 23 9 20 4.500 20.500 4 16 1 12 4 8 4.500 3.500 9 4Z"/><text class="nm" x="12" y="16">8</text></svg>
<svg><path d="M12 1L15 4 19.500 3.500 20 8 23 12 20 16 19.500 20.500 15 20 12 23 9 20 4.500 20.500 4 16 1 12 4 8 4.500 3.500 9 4Z"/><text class="nm" x="12" y="16">10</text></svg>
<svg><path d="M12 1L15 4 19.500 3.500 20 8 23 12 20 16 19.500 20.500 15 20 12 23 9 20 4.500 20.500 4 16 1 12 4 8 4.500 3.500 9 4Z"/><text class="nm" x="12" y="16">12</text></svg>
<svg><path d="M12 1L15 4 19.500 3.500 20 8 23 12 20 16 19.500 20.500 15 20 12 23 9 20 4.500 20.500 4 16 1 12 4 8 4.500 3.500 9 4Z"/><text class="nm" x="12" y="16">16</text></svg>
<svg><path d="M12 1L15 4 19.500 3.500 20 8 23 12 20 16 19.500 20.500 15 20 12 23 9 20 4.500 20.500 4 16 1 12 4 8 4.500 3.500 9 4Z"/><text class="nm" x="12" y="16">24</text></svg>
<svg><path d="M12 1L15 4 19.500 3.500 20 8 23 12 20 16 19.500 20.500 15 20 12 23 9 20 4.500 20.500 4 16 1 12 4 8 4.500 3.500 9 4Z"/><text class="nm" x="12" y="16">32</text></svg>
<svg><path d="M5 5H19V17H5ZM5 9H1L3 13 1 18H8V17M19 9H23L21 13 23 18H16V17"/></svg>
<svg><path d="M5 7H19V19H5ZM5 15H1L3 11 1 6H8V7M19 15H23L21 11 23 6H16V7"/></svg>
<svg><path d="M5 15C5 3 19 3 19 15 16 10 8 10 5 15ZM5 11L1 13 3 17 1 22 8 20M19 11L23 13 21 17 23 22 16 20"/></svg>
<svg><path d="M5 9C5 21 19 21 19 9 16 14 8 14 5 9ZM5 13L1 11 3 7 1 2 8 4M19 13L23 11 21 7 23 2 16 4"/></svg>
<svg><path d="M6 19V4C6 1 8 1 10 1H21C23 1 23 5 21 5H19V19C19 22 17 23 15 23H3C1 23 0 19 3 19H14V21"/></svg>
<svg><path d="M5 5V21C5 24 1 24 1 21V5C1 3 3 3 5 3H17V1C17 -1 21 -1 21 1V18C21 20 19 20 17 20H5M17 3V5"/></svg>
<svg><path d="M1 4C6 0 8 2 12 4S19 6 23 3V20C18 24 16 22 12 20S5 18 1 21Z"/></svg>
<svg><path d="M1 3C5 0 7 6 10 4S15 1 17 4 21 5 23 3V20C20 23 18 17 15 19S10 22 7 19 3 19 1 21C2 18 3 16 2 12S2 6 1 3Z"/></svg>
</div>
<div class="slab">标注</div>
<div class="sgrid">
<svg><path d="M1 3H23V18H12L8 23V18H1Z"/></svg>
<svg><path d="M6 3H18Q23 3 23 8V13Q23 18 18 18H12L8 23V18H6Q1 18 1 13V8Q1 3 6 3Z"/></svg>
<svg><path d="M12 2C19 2 23 6 23 11S19 20 12 20L9 23V20C4 19 1 16 1 11S5 2 12 2Z"/></svg>
<svg><path d="M7 3C9 0 15 0 17 3 22 2 25 8 22 12 24 17 19 20 15 18 13 21 9 20 8 19L9 23 5 18C2 18 0 14 2 11 0 7 3 3 7 3Z"/></svg>
<svg><path d="M9 1H23V19H9ZM9 14L1 23"/></svg>
<svg><path d="M7 1H23V19H7ZM7 12H5L2 23"/></svg>
<svg><path d="M10 0H23V17H10ZM10 10H1V17L6 23"/></svg>
<svg><rect class="fl" x="13" y="1" width="10" height="19"/><path d="M9 3V20M9 14L1 23"/></svg>
<svg><rect class="fl" x="13" y="1" width="10" height="19"/><path d="M9 3V20M9 12H7L3 23"/></svg>
<svg><rect class="fl" x="13" y="0" width="10" height="19"/><path d="M9 1V18M9 10H2V17L6 22"/></svg>
<svg><rect class="fl" x="9" y="1" width="14" height="19"/><path d="M9 14L1 23"/></svg>
<svg><rect class="fl" x="9" y="1" width="14" height="19"/><path d="M9 11H6L3 23"/></svg>
<svg><rect class="fl" x="9" y="0" width="14" height="19"/><path d="M9 10H2V17L7 23"/></svg>
<svg><rect class="fp" x="14" y="1" width="9" height="19"/><path d="M14 1H23V20H14ZM9 2V20M9 14L1 23"/></svg>
<svg><rect class="fp" x="14" y="1" width="9" height="19"/><path d="M14 1H23V20H14ZM9 2V20M9 11H7L3 23"/></svg>
<svg><rect class="fp" x="14" y="0" width="9" height="19"/><path d="M14 0H23V19H14ZM9 1V18M9 10H2V17L6 22"/></svg>
</div>
<div class="slab">动作按钮</div>
<div class="sgrid">
<svg><rect x="1" y="1" width="22" height="22" rx="1"/><rect x="4" y="4" width="16" height="16"/><path d="M15 7L8 12 15 17Z"/></svg>
<svg><rect x="1" y="1" width="22" height="22" rx="1"/><rect x="4" y="4" width="16" height="16"/><path d="M9 7L16 12 9 17Z"/></svg>
<svg><rect x="1" y="1" width="22" height="22" rx="1"/><rect x="4" y="4" width="16" height="16"/><path d="M7 7V17M17 7L9 12 17 17Z"/></svg>
<svg><rect x="1" y="1" width="22" height="22" rx="1"/><rect x="4" y="4" width="16" height="16"/><path d="M17 7V17M7 7L15 12 7 17Z"/></svg>
<svg><rect x="1" y="1" width="22" height="22" rx="2"/><path d="M12 5L18 11V18H6V11ZM11 13H13V15H11Z"/></svg>
<svg><rect x="1" y="1" width="22" height="22" rx="2"/><path d="M12 4V7M10 10H13V18M9 18H15" stroke-width="1.800"/></svg>
<svg><rect x="1" y="1" width="22" height="22" rx="2"/><path d="M6 13V15C6 21 15 21 15 15V9H18L13 4 8 9H11V15C11 17 9 17 9 15V13Z"/></svg>
<svg><rect x="1" y="1" width="22" height="22" rx="2"/><path d="M4 8H14V16H4ZM14 11L20 7V17L14 13"/></svg>
<svg><rect x="1" y="1" width="22" height="22" rx="2"/><path d="M6 5H14L18 9V19H6ZM14 5V9H18"/></svg>
<svg><rect x="1" y="1" width="22" height="22" rx="2"/><path d="M4 9H8L13 5V19L8 15H4ZM16 7L18 6M16 12H19M16 17L18 18"/></svg>
<svg><rect x="1" y="1" width="22" height="22" rx="2"/><path d="M8 8C8 3 16 3 16 8 16 11 12 11 12 15M12 17V20" stroke-width="2"/></svg>
<svg><rect x="1" y="1" width="22" height="22" rx="2"/><path d="M4 4H20V20H4Z M1 1L4 4M23 1L20 4"/></svg>
</div>
<div class="sfoot"></div>
</div>

<!-- annotation arrow -->
<svg class="rarrow"><polygon points="342,233 337,251 330,246 236,341 234,340 325,241 318,238" fill="#f5343a"/></svg>

<!-- volume widget -->
<div class="vol"><div class="volb"></div></div>

<!-- watermark -->
<svg class="wmark">
<text x="22" y="133" font-family="Liberation Sans" font-weight="700" font-size="88" textLength="125" lengthAdjust="spacingAndGlyphs">Bai</text>
<ellipse cx="164" cy="60" rx="15" ry="19"/><ellipse cx="192" cy="33" rx="14" ry="20"/><ellipse cx="227" cy="35" rx="14" ry="18"/><ellipse cx="248" cy="68" rx="15" ry="19"/>
<path d="M205 65C222 65 226 84 240 98 258 116 250 135 224 134 210 133 200 131 188 134 166 136 152 124 158 108 164 92 186 66 205 65Z"/>
<text class="wdu" x="172" y="124" font-family="Liberation Sans" font-weight="700" font-size="54" textLength="60" lengthAdjust="spacingAndGlyphs">du</text>
<text x="266" y="131" font-family="Noto Sans CJK SC" font-weight="700" font-size="64">经验</text>
<text x="16" y="183" font-family="Liberation Sans" font-size="47" textLength="386">jingyan.baidu.com</text>
</svg>

</div>
<script src="https://cdn.jsdelivr.net/npm/bootstrap@5.3.0/dist/js/bootstrap.bundle.min.js"></script>
</body>
</html>
